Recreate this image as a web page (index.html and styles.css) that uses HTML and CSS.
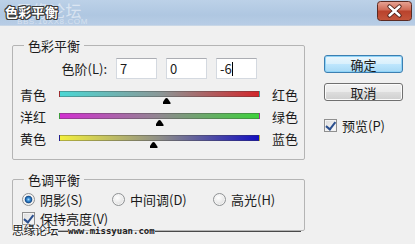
FILE: index.html
```html
<!DOCTYPE html>
<html lang="zh">
<head>
<meta charset="utf-8">
<title>色彩平衡</title>
<link rel="stylesheet" href="styles.css">
</head>
<body>
<div class="window">
  <div class="titlebar">
    <span class="title">色彩平衡</span>
    <span class="wm-title">思缘论坛<small>BBS.16XX8.COM</small></span>
    <span class="close">
      <svg width="35" height="20" viewBox="0 0 35 20">
        <defs>
          <linearGradient id="cg" x1="0" y1="0" x2="0" y2="1">
            <stop offset="0" stop-color="#e7a596"/>
            <stop offset="0.45" stop-color="#cf6a55"/>
            <stop offset="0.5" stop-color="#b9422c"/>
            <stop offset="1" stop-color="#c4563c"/>
          </linearGradient>
        </defs>
        <rect x="0.5" y="0.5" width="34" height="19" rx="3" fill="url(#cg)" stroke="#5b2a22"/>
        <path d="M12.5 5.5 L22.5 14.5 M22.5 5.5 L12.5 14.5" stroke="#4a1c14" stroke-width="4.2" stroke-linecap="round"/>
        <path d="M12.5 5.5 L22.5 14.5 M22.5 5.5 L12.5 14.5" stroke="#ffffff" stroke-width="2.4" stroke-linecap="round"/>
      </svg>
    </span>
  </div>

  <div class="body">
    <div class="main">
      <fieldset class="group g1">
        <legend>色彩平衡</legend>
        <div class="levels">
          <span class="lvl-label">色阶(L):</span>
          <span class="field">7</span>
          <span class="field">0</span>
          <span class="field">-6<i class="caret"></i></span>
        </div>
        <div class="slider-row">
          <span class="lbl-l">青色</span>
          <div class="track t-cr"><span class="thumb" style="--v:7px"></span></div>
          <span class="lbl-r">红色</span>
        </div>
        <div class="slider-row">
          <span class="lbl-l">洋红</span>
          <div class="track t-mg"><span class="thumb" style="--v:0px"></span></div>
          <span class="lbl-r">绿色</span>
        </div>
        <div class="slider-row">
          <span class="lbl-l">黄色</span>
          <div class="track t-yb"><span class="thumb" style="--v:-6px"></span></div>
          <span class="lbl-r">蓝色</span>
        </div>
      </fieldset>

      <fieldset class="group g2">
        <legend>色调平衡</legend>
        <div class="radios">
          <span class="radio-item r1"><i class="radio on"></i>阴影(S)</span>
          <span class="radio-item r2"><i class="radio"></i>中间调(D)</span>
          <span class="radio-item r3"><i class="radio"></i>高光(H)</span>
        </div>
        <div class="check-row"><i class="checkbox"></i>保持亮度(V)</div>
      </fieldset>
    </div>

    <div class="side">
      <span class="btn default">确定</span>
      <span class="btn">取消</span>
      <div class="check-row preview"><i class="checkbox"></i>预览(P)</div>
    </div>
  </div>

  <div class="wm-bottom">
    <span class="wm-cn">思缘论坛</span>
    <span class="wm-line short"></span>
    <span class="wm-url">www.missyuan.com</span>
    <span class="wm-line"></span>
  </div>
</div>
</body>
</html>
```

FILE: styles.css
```css
* { box-sizing: border-box; }
html, body { margin: 0; padding: 0; }
body {
  width: 415px;
  height: 244px;
  overflow: hidden;
  background: #f0f0f0;
  font-family: "Noto Sans CJK SC", "Liberation Sans", sans-serif;
  font-size: 13px;
  color: #1b1b1b;
}
.window {
  position: relative;
  width: 415px;
  height: 244px;
  background: #f0f0f0;
}

/* title bar */
.titlebar {
  position: relative;
  height: 26px;
  display: flex;
  align-items: center;
  justify-content: space-between;
  padding: 0 3px 0 5px;
  background: linear-gradient(to bottom, #bcd1e8 0%, #afc7e1 60%, #b8cde6 100%);
  border-bottom: 1px solid #c9d7e6;
}
.title {
  position: relative;
  z-index: 2;
  font-size: 13px;
  line-height: 16px;
  font-weight: 700;
  color: #ffffff;
  letter-spacing: 0.3px;
  margin-top: -1px;
  text-shadow: 1px 0 0 #3a3a3a, -1px 0 0 #3a3a3a, 0 1px 0 #3a3a3a, 0 -1px 0 #3a3a3a,
               1px 1px 0 #3a3a3a, -1px -1px 0 #3a3a3a, 1px -1px 0 #3a3a3a, -1px 1px 0 #3a3a3a;
}
.wm-title {
  position: absolute;
  left: 16px;
  top: 1px;
  z-index: 1;
  font-size: 16px;
  line-height: 18px;
  color: rgba(255, 255, 255, 0.5);
  letter-spacing: 0.5px;
}
.wm-title small {
  position: absolute;
  left: 1px;
  top: 17px;
  font-family: "Liberation Sans", sans-serif;
  font-size: 8px;
  line-height: 8px;
  letter-spacing: 0.6px;
  color: rgba(255, 255, 255, 0.45);
  white-space: nowrap;
}
.close {
  display: block;
  width: 35px;
  height: 20px;
  margin-top: -3px;
}
.close svg { display: block; }

/* body */
.body {
  display: flex;
  padding: 12px 0 0 12px;
}
.main {
  width: 293px;
  display: flex;
  flex-direction: column;
}
.group {
  margin: 0;
  padding: 0;
  border: 1px solid #b4b4b4;
  border-radius: 2px;
  min-width: 0;
}
.group legend {
  margin-left: 11px;
  padding: 0 4px;
  font-size: 13px;
  line-height: 15px;
}
.g1 { padding-bottom: 10px; }
.g2 { margin-top: 12px; padding-bottom: 2px; }

/* levels */
.levels {
  display: grid;
  grid-template-columns: 94px 41px 41px 41px;
  column-gap: 9px;
  align-items: center;
  margin-top: 5px;
}
.lvl-label { text-align: right; line-height: 15px; }
.field {
  position: relative;
  height: 21px;
  background: #fff;
  border: 1px solid #d4d9e0;
  border-top-color: #abadb3;
  padding-left: 3px;
  line-height: 19px;
  font-size: 13px;
}
.caret {
  display: inline-block;
  width: 1px;
  height: 14px;
  background: #000;
  vertical-align: -2px;
}

/* sliders */
.slider-row {
  display: grid;
  grid-template-columns: 46px 201px auto;
  align-items: center;
  height: 22px;
}
.levels + .slider-row { margin-top: 4px; }
.lbl-l { padding-left: 7px; line-height: 15px; }
.lbl-r { padding-left: 12px; line-height: 15px; }
.track {
  position: relative;
  height: 6px;
  border: 1px solid rgba(60, 60, 60, 0.35);
}
.t-cr { background: linear-gradient(to right, #4bd7d4, #8a9898 50%, #d2262a); }
.t-mg { background: linear-gradient(to right, #d12fd0, #908890 50%, #3ed13c); }
.t-yb { background: linear-gradient(to right, #f3ef3c, #8e8e88 50%, #1410c0); }
.thumb {
  position: absolute;
  left: calc(50% + var(--v));
  top: 6px;
  width: 8px;
  height: 6px;
  margin-left: -4px;
  background: #000;
  clip-path: polygon(0 100%, 0 80%, 35% 10%, 50% 0, 65% 10%, 100% 80%, 100% 100%);
}

/* radios */
.radios {
  display: flex;
  height: 20px;
  margin-top: 2px;
  align-items: center;
  padding-left: 9px;
}
.radio-item {
  display: flex;
  align-items: center;
  gap: 5px;
  line-height: 15px;
}
.r1 { width: 90px; }
.r2 { width: 101px; }
.radio {
  display: block;
  width: 13px;
  height: 13px;
  border-radius: 50%;
  border: 1px solid #8f9294;
  background: radial-gradient(circle at 40% 35%, #ffffff 0%, #e8e8e8 55%, #cfcfcf 100%);
  box-shadow: inset 0 0 0 1px #f4f4f4;
}
.radio.on {
  background:
    radial-gradient(circle 4px at 50% 50%, #a9dcff 0, #3b8fd6 1.6px, #144a88 3.4px, rgba(20, 74, 136, 0) 4.2px),
    radial-gradient(circle at 40% 35%, #ffffff 0%, #e8e8e8 55%, #cfcfcf 100%);
}

/* checkbox rows */
.check-row {
  display: flex;
  align-items: center;
  gap: 5px;
  height: 19px;
  padding-left: 9px;
  line-height: 15px;
}
.checkbox {
  position: relative;
  display: block;
  width: 13px;
  height: 13px;
  border: 1px solid #8f8f8f;
  background: linear-gradient(135deg, #dcdcdc, #fbfbfb);
  box-shadow: inset 0 0 0 1px #f2f2f2;
}
.checkbox::after {
  content: "";
  position: absolute;
  left: 2px;
  top: 0px;
  width: 4px;
  height: 8px;
  border-right: 2.5px solid #2b4f8e;
  border-bottom: 2.5px solid #2b4f8e;
  transform: rotate(38deg);
  transform-origin: 60% 60%;
}

/* side */
.side {
  margin-left: 19px;
  padding-top: 17px;
  display: flex;
  flex-direction: column;
  width: 79px;
}
.btn {
  display: flex;
  align-items: center;
  justify-content: center;
  width: 79px;
  height: 18px;
  border: 1px solid #707070;
  border-radius: 3px;
  background: linear-gradient(to bottom, #f2f2f2 0%, #ebebeb 48%, #dddddd 52%, #cfcfcf 100%);
  box-shadow: inset 0 0 0 1px #fbfbfb;
  font-size: 13px;
  line-height: 15px;
}
.btn.default {
  border-color: #3c7fb1;
  background: linear-gradient(to bottom, #eaf6fd 0%, #d9f0fc 48%, #bee6fd 52%, #a7d9f5 100%);
  box-shadow: inset 0 0 0 1px #8fd3f7;
}
.btn + .btn { margin-top: 10px; }
.check-row.preview {
  margin-top: 15px;
  padding-left: 0;
  gap: 5px;
}

/* bottom watermark overlay */
.wm-bottom {
  position: absolute;
  left: 12px;
  top: 222px;
  width: 289px;
  height: 16px;
  display: flex;
  align-items: center;
}
.wm-cn {
  font-size: 12px;
  line-height: 14px;
  color: #222;
  letter-spacing: -0.5px;
  text-shadow: 0 0 2px #fff, 0 0 2px #fff;
}
.wm-line {
  flex: 1;
  height: 1px;
  background: #4a4a4a;
  margin-top: 3px;
}
.wm-line.short { flex: 0 0 10px; }
.wm-url {
  font-family: "DejaVu Sans Mono", monospace;
  font-size: 9px;
  font-weight: 700;
  line-height: 9px;
  color: #1f1f1f;
  margin-top: 3px;
  letter-spacing: 0;
}
```
